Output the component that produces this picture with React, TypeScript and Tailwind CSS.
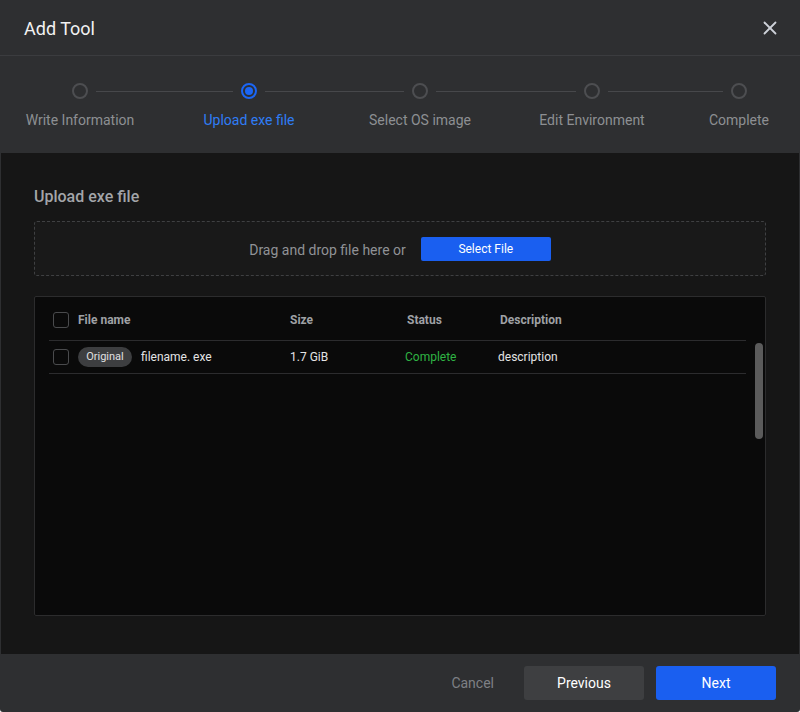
import { X } from "lucide-react";

const steps = [
  { label: "Write Information", state: "done" },
  { label: "Upload exe file", state: "active" },
  { label: "Select OS image", state: "todo" },
  { label: "Edit Environment", state: "todo" },
  { label: "Complete", state: "todo" },
];

const lineWidths = ["w-[137px]", "w-[139px]", "w-[140px]", "w-[115px]"];

function StepDot({ active }: { active: boolean }) {
  if (active) {
    return (
      <span className="flex h-4 w-4 shrink-0 items-center justify-center rounded-full border-2 border-[#1b66f5]">
        <span className="h-2 w-2 rounded-full bg-[#1b66f5]" />
      </span>
    );
  }
  return <span className="h-4 w-4 shrink-0 rounded-full border-2 border-[#4d4e51]" />;
}

function Checkbox() {
  return <span className="h-4 w-4 shrink-0 rounded-[3px] border border-[#4a4b4d]" />;
}

export default function App() {
  return (
    <div
      className="flex h-[712px] w-[800px] flex-col overflow-hidden rounded-b-[3px] bg-[#2e2f31] text-[#e6e6e6]"
      style={{ fontFamily: "Roboto, 'Liberation Sans', sans-serif" }}
    >
      {/* header */}
      <div className="flex h-[55px] shrink-0 items-center justify-between pl-6 pr-[19px]">
        <h1 className="pt-[2px] text-[18px] text-[#f2f2f2]">Add Tool</h1>
        <X className="h-[22px] w-[22px] text-[#cdd1d8]" strokeWidth={2} />
      </div>
      <div className="h-px shrink-0 bg-[#3b3c3f]" />

      {/* stepper */}
      <div className="h-[97px] shrink-0 pt-[27px]">
        <div className="flex items-center pl-[72px]">
          {steps.map((s, i) => (
            <div key={s.label} className="flex items-center">
              <StepDot active={s.state === "active"} />
              {i < lineWidths.length && (
                <span className={`mx-2 h-px ${lineWidths[i]} bg-[#47484b]`} />
              )}
            </div>
          ))}
        </div>
        <div className="mt-[11px] grid grid-cols-[160px_178px_164px_180px_114px] text-[14px] leading-5">
          {steps.map((s) => (
            <span
              key={s.label}
              className={`text-center ${s.state === "active" ? "text-[#2f7df6]" : "text-[#8d8f93]"}`}
            >
              {s.label}
            </span>
          ))}
        </div>
      </div>

      {/* body */}
      <div className="mx-px flex h-[501px] shrink-0 flex-col bg-[#161616] px-[33px] pt-[32px]">
        <h2 className="text-[16px] font-medium leading-6 text-[#a3a5a9]">Upload exe file</h2>

        <div className="mt-3 flex h-[55px] items-center justify-center gap-[15px] rounded-[3px] border border-dashed border-[#3f4042] bg-[#191919]">
          <span className="pt-[3px] text-[14px] text-[#909296]">Drag and drop file here or</span>
          <button className="h-6 w-[130px] rounded-[2px] bg-[#1a5ff0] pt-px text-[12px] text-white">
            Select File
          </button>
        </div>

        <div className="relative mt-5 h-[320px] rounded-[2px] border border-[#2c2c2d] bg-[#0a0a0a] pl-[14px]">
          <div className="w-[697px]">
            <div className="grid h-[44px] grid-cols-[241px_117px_93px_1fr] items-center border-b border-[#2c2c2e] pt-[3px] text-[12px] font-bold text-[#9fa1a5]">
              <div className="flex items-center gap-[9px] pl-1">
                <Checkbox />
                <span>File name</span>
              </div>
              <span>Size</span>
              <span>Status</span>
              <span>Description</span>
            </div>
            <div className="grid h-[33px] grid-cols-[241px_115px_93px_1fr] items-center border-b border-[#2c2c2e] text-[12px] text-[#e4e4e4]">
              <div className="flex items-center gap-[9px] pl-1">
                <Checkbox />
                <span className="flex h-5 w-[54px] items-center justify-center rounded-full bg-[#3d3e40] text-[11px] text-[#e0e0e0]">
                  Original
                </span>
                <span>filename. exe</span>
              </div>
              <span>1.7 GiB</span>
              <span className="text-[#2fb344]">Complete</span>
              <span>description</span>
            </div>
          </div>
          <span className="absolute right-[2px] top-[46px] h-[96px] w-2 rounded-full bg-[#5b5b5b]" />
        </div>
      </div>

      {/* footer */}
      <div className="flex flex-1 items-center justify-end pr-6">
        <button className="mr-[30px] text-[14px] text-[#7e8085]">Cancel</button>
        <button className="h-[34px] w-[120px] rounded-[3px] bg-[#3e3f41] text-[14px] text-white">
          Previous
        </button>
        <button className="ml-3 h-[34px] w-[120px] rounded-[3px] bg-[#1a5ff0] text-[14px] text-white">
          Next
        </button>
      </div>
    </div>
  );
}
